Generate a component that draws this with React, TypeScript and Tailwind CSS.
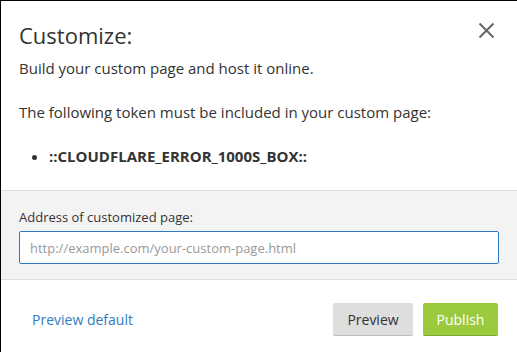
import React from "react";

export default function App() {
  return (
    <div
      className="w-[517px] h-[352px] bg-white border-l border-t border-black overflow-hidden text-[#333]"
      style={{ fontFamily: '"Open Sans", sans-serif' }}
    >
      <div className="px-[18px] pt-[18px] relative">
        <h1 className="text-[22px] leading-[32px] font-normal">Customize:</h1>
        <button className="absolute right-[22px] top-[21px] text-[#666]">
          <svg width="17" height="17" viewBox="0 0 17 17" fill="none" stroke="currentColor" strokeWidth="2">
            <path d="M1.5 1.5l14 14M15.5 1.5l-14 14" />
          </svg>
        </button>
        <p className="text-[15px] leading-[22px] mt-[6px]">Build your custom page and host it online.</p>
        <p className="text-[15px] leading-[22px] mt-[22px]">The following token must be included in your custom page:</p>
        <ul className="list-disc pl-[30px] mt-[22px] text-[15px] leading-[22px]">
          <li className="font-bold">::CLOUDFLARE_ERROR_1000S_BOX::</li>
        </ul>
      </div>
      <div className="mt-[23px] bg-[#f3f3f3] border-y border-[#dedede] px-[18px] pt-[16px] pb-[15px]">
        <label className="block text-[13px] leading-[20px] mb-[4px]">Address of customized page:</label>
        <input
          className="w-[480px] h-[33px] bg-white border border-[#2f7bbf] rounded-[2px] px-[10px] text-[13px] placeholder:text-[#999] outline-none"
          placeholder="http://example.com/your-custom-page.html"
        />
      </div>
      <div className="flex items-center justify-between pl-[31px] pr-[19px] pt-[23px]">
        <a className="text-[14px] text-[#2f7bbf] cursor-pointer">Preview default</a>
        <div className="flex gap-[10px]">
          <button className="h-[33px] w-[80px] bg-[#dedede] border-b border-[#bdbdbd] rounded-[2px] text-[14px] text-[#333]">
            Preview
          </button>
          <button className="h-[33px] w-[75px] bg-[#9bca3e] border-b border-[#7fa832] rounded-[2px] text-[14px] text-white">
            Publish
          </button>
        </div>
      </div>
    </div>
  );
}
